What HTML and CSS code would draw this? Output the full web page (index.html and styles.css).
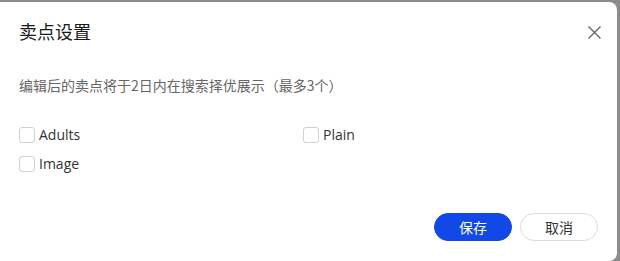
FILE: index.html
```html
<html>
  <head>
    <meta charset="utf-8">
    <link rel="stylesheet" href="styles.css">
  </head>
  <body>
    <div class="dialog">
      <div class="dialogHeader">
        <span class="dialogTitle">卖点设置</span>
        <a class="closeBtn">
          <svg width="13" height="13" viewBox="0 0 13 13">
            <path d="M0.5 0.5 L12.5 12.5 M12.5 0.5 L0.5 12.5" stroke="#666" stroke-width="1.4" fill="none"/>
          </svg>
        </a>
      </div>
      <div class="dialogBody">
        <p class="hint">编辑后的卖点将于2日内在搜索择优展示（最多3个）</p>
        <ul class="options">
          <li><label><span class="checkbox"></span>Adults</label></li>
          <li><label><span class="checkbox"></span>Plain</label></li>
          <li><label><span class="checkbox"></span>Image</label></li>
        </ul>
      </div>
      <div class="dialogFooter">
        <button class="btn btnPrimary">保存</button>
        <button class="btn">取消</button>
      </div>
    </div>
  </body>
</html>
```

FILE: styles.css
```css
html, body {
  height: 100%;
}

body {
  margin: 0;
  background-color: #8c8c8c;
  font-family: "Open Sans", "Noto Sans CJK SC", sans-serif;
  overflow: hidden;
}

.dialog {
  box-sizing: border-box;
  margin: 2px 3px 0 -10px;
  height: calc(100% - 2px);
  background-color: white;
  border-radius: 8px;
}

.dialogHeader {
  display: flex;
  align-items: flex-start;
  justify-content: space-between;
  padding: 16px 16px 0 29px;
  height: 26px;
}

.dialogTitle {
  font-family: "Noto Sans CJK SC", sans-serif;
  font-size: 18px;
  line-height: 26px;
  color: #1a1a1a;
}

.closeBtn {
  display: flex;
  margin-top: 8px;
  cursor: pointer;
}

.dialogBody {
  padding: 0 20px 0 29px;
}

.hint {
  margin: 31px 0 0;
  font-family: "Noto Sans CJK SC", sans-serif;
  font-size: 14px;
  color: #666;
  line-height: 20px;
}

.options {
  display: grid;
  grid-template-columns: 284px 284px;
  row-gap: 9px;
  margin: 30px 0 0;
  padding: 0;
  list-style: none;
}

.options label {
  display: flex;
  align-items: center;
  gap: 4px;
  font-size: 14px;
  color: #333;
  line-height: 20px;
}

.checkbox {
  width: 14px;
  height: 14px;
  border: solid 1px #d0d0d0;
  border-radius: 3px;
  background-color: white;
}

.dialogFooter {
  display: flex;
  justify-content: flex-end;
  gap: 8px;
  padding: 39px 19px 0 0;
}

.btn {
  width: 78px;
  height: 28px;
  border: solid 1px #dcdcdc;
  border-radius: 14px;
  background-color: white;
  font-family: "Noto Sans CJK SC", sans-serif;
  font-size: 14px;
  color: #333;
  cursor: pointer;
}

.btnPrimary {
  background-color: #1249e6;
  border-color: #1249e6;
  color: white;
}
```
